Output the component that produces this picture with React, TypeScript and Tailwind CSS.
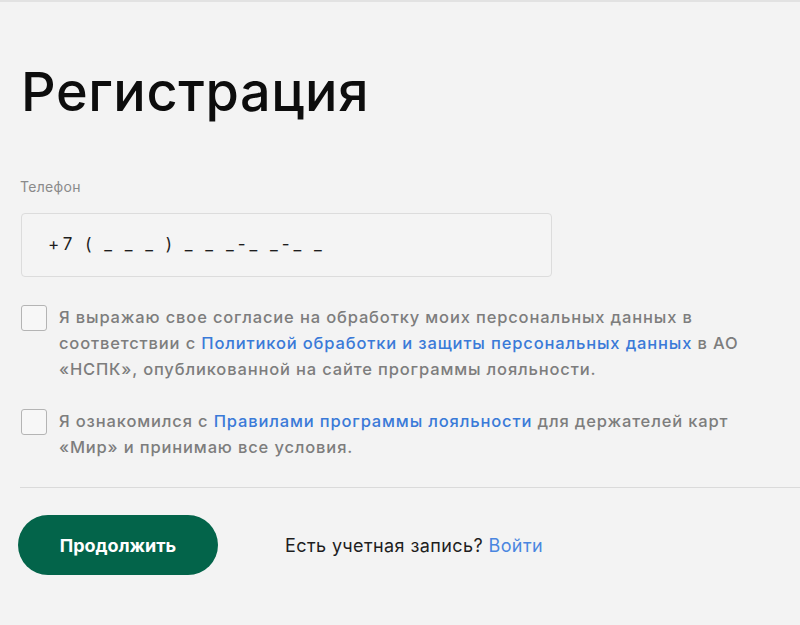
import React from "react";

const App = () => {
  return (
    <div
      className="min-h-screen w-full bg-[#f3f3f3] border-t-2 border-[#e2e2e2] overflow-hidden"
      style={{ fontFamily: 'Inter, "Noto Sans", sans-serif' }}
    >
      <div className="pl-[20px] pt-[58px]">
        <h1 className="text-[54px] leading-[64px] font-medium text-[#0d0d0d] tracking-[0.6px] ml-[1px]">
          Регистрация
        </h1>

        <div className="mt-[54px] text-[14px] leading-[18px] text-[#8a8a8a] tracking-[0.3px]">Телефон</div>

        <div className="mt-[17px] w-[531px] h-[64px] ml-[1px] rounded-[4px] border border-[#dcdcdc] bg-[#f4f4f4] flex items-center pl-[26px]">
          <span className="text-[17px] text-[#1e1e1e] tracking-[4px]">+7 ( _ _ _ ) _ _ _-_ _-_ _</span>
        </div>

        <div className="mt-[27px] flex gap-[12px] pr-[16px]">
          <div className="w-[26px] h-[26px] shrink-0 rounded-[3px] border border-[#b4b4b4] bg-[#f7f7f7] mt-[1px] ml-[1px]" />
          <p className="text-[16.5px] leading-[26px] font-medium text-[#7d7d7d] tracking-[0.85px]">
            Я выражаю свое согласие на обработку моих персональных данных в соответствии с{" "}
            <a className="text-[#3a7ad8]">Политикой обработки и защиты персональных данных</a> в АО «НСПК»,
            опубликованной на сайте программы лояльности.
          </p>
        </div>

        <div className="mt-[26px] flex gap-[12px] pr-[16px]">
          <div className="w-[26px] h-[26px] shrink-0 rounded-[3px] border border-[#b4b4b4] bg-[#f7f7f7] mt-[1px] ml-[1px]" />
          <p className="text-[16.5px] leading-[26px] font-medium text-[#7d7d7d] tracking-[0.85px]">
            Я ознакомился с <a className="text-[#3a7ad8]">Правилами программы лояльности</a> для держателей карт
            «Мир» и принимаю все условия.
          </p>
        </div>

        <div className="mt-[27px] border-t border-[#dadada]" />

        <div className="mt-[27px] flex items-center">
          <button className="w-[200px] h-[60px] -ml-[2px] rounded-full bg-[#03644a] text-white text-[18px] font-bold">
            Продолжить
          </button>
          <div className="ml-[67px] text-[18px] text-[#1e1e1e] tracking-[0.4px]">
            Есть учетная запись? <a className="text-[#4a86e0]">Войти</a>
          </div>
        </div>
      </div>
    </div>
  );
};

export default App;
